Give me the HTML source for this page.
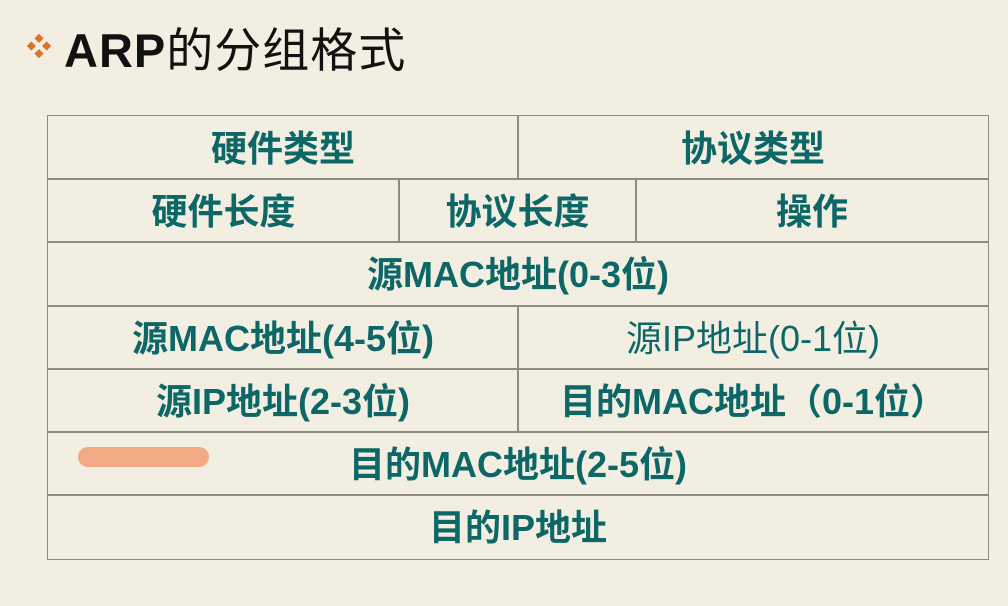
<!DOCTYPE html>
<html><head><meta charset="utf-8"><style>
body{margin:0;width:1008px;height:606px;overflow:hidden;background:#f3eee2;position:relative;font-family:"Liberation Sans","Noto Sans CJK SC",sans-serif}
.t{position:absolute;left:64px;top:12px;font-size:47px;color:#111;white-space:nowrap;letter-spacing:1px}
.t b{font-weight:bold}
.d{position:absolute;left:27px;top:34px;width:24px;height:24px}
.c{position:absolute;border:1.5px solid #8e8a80;box-sizing:border-box;display:flex;align-items:center;justify-content:center;color:#0d6766;font-size:36px;font-weight:bold;white-space:nowrap;padding-bottom:4px}
.n{font-weight:normal}
.hl{position:absolute;left:78px;top:447px;width:131px;height:20px;border-radius:10px;background:#f2aa84}
</style></head><body>
<svg class="d" viewBox="0 0 22 22"><g fill="#d9732e"><rect x="8" y="1" width="6" height="6" transform="rotate(45 11 4)"/><rect x="8" y="15" width="6" height="6" transform="rotate(45 11 18)"/><rect x="1" y="8" width="6" height="6" transform="rotate(45 4 11)"/><rect x="15" y="8" width="6" height="6" transform="rotate(45 18 11)"/></g></svg>
<div class="t"><b>ARP</b>的分组格式</div>
<div class="c" style="left:47px;top:115px;width:472px;height:65px">硬件类型</div>
<div class="c" style="left:517px;top:115px;width:472px;height:65px">协议类型</div>
<div class="c" style="left:47px;top:178px;width:353px;height:65px">硬件长度</div>
<div class="c" style="left:398px;top:178px;width:239px;height:65px">协议长度</div>
<div class="c" style="left:635px;top:178px;width:354px;height:65px">操作</div>
<div class="c" style="left:47px;top:241px;width:942px;height:66px">源MAC地址(0-3位)</div>
<div class="c" style="left:47px;top:305px;width:472px;height:65px">源MAC地址(4-5位)</div>
<div class="c n" style="left:517px;top:305px;width:472px;height:65px">源IP地址(0-1位)</div>
<div class="c" style="left:47px;top:368px;width:472px;height:65px">源IP地址(2-3位)</div>
<div class="c" style="left:517px;top:368px;width:472px;height:65px">目的MAC地址（0-1位）</div>
<div class="c" style="left:47px;top:431px;width:942px;height:65px">目的MAC地址(2-5位)</div>
<div class="c" style="left:47px;top:494px;width:942px;height:66px">目的IP地址</div>
<div class="hl"></div>
</body></html>
